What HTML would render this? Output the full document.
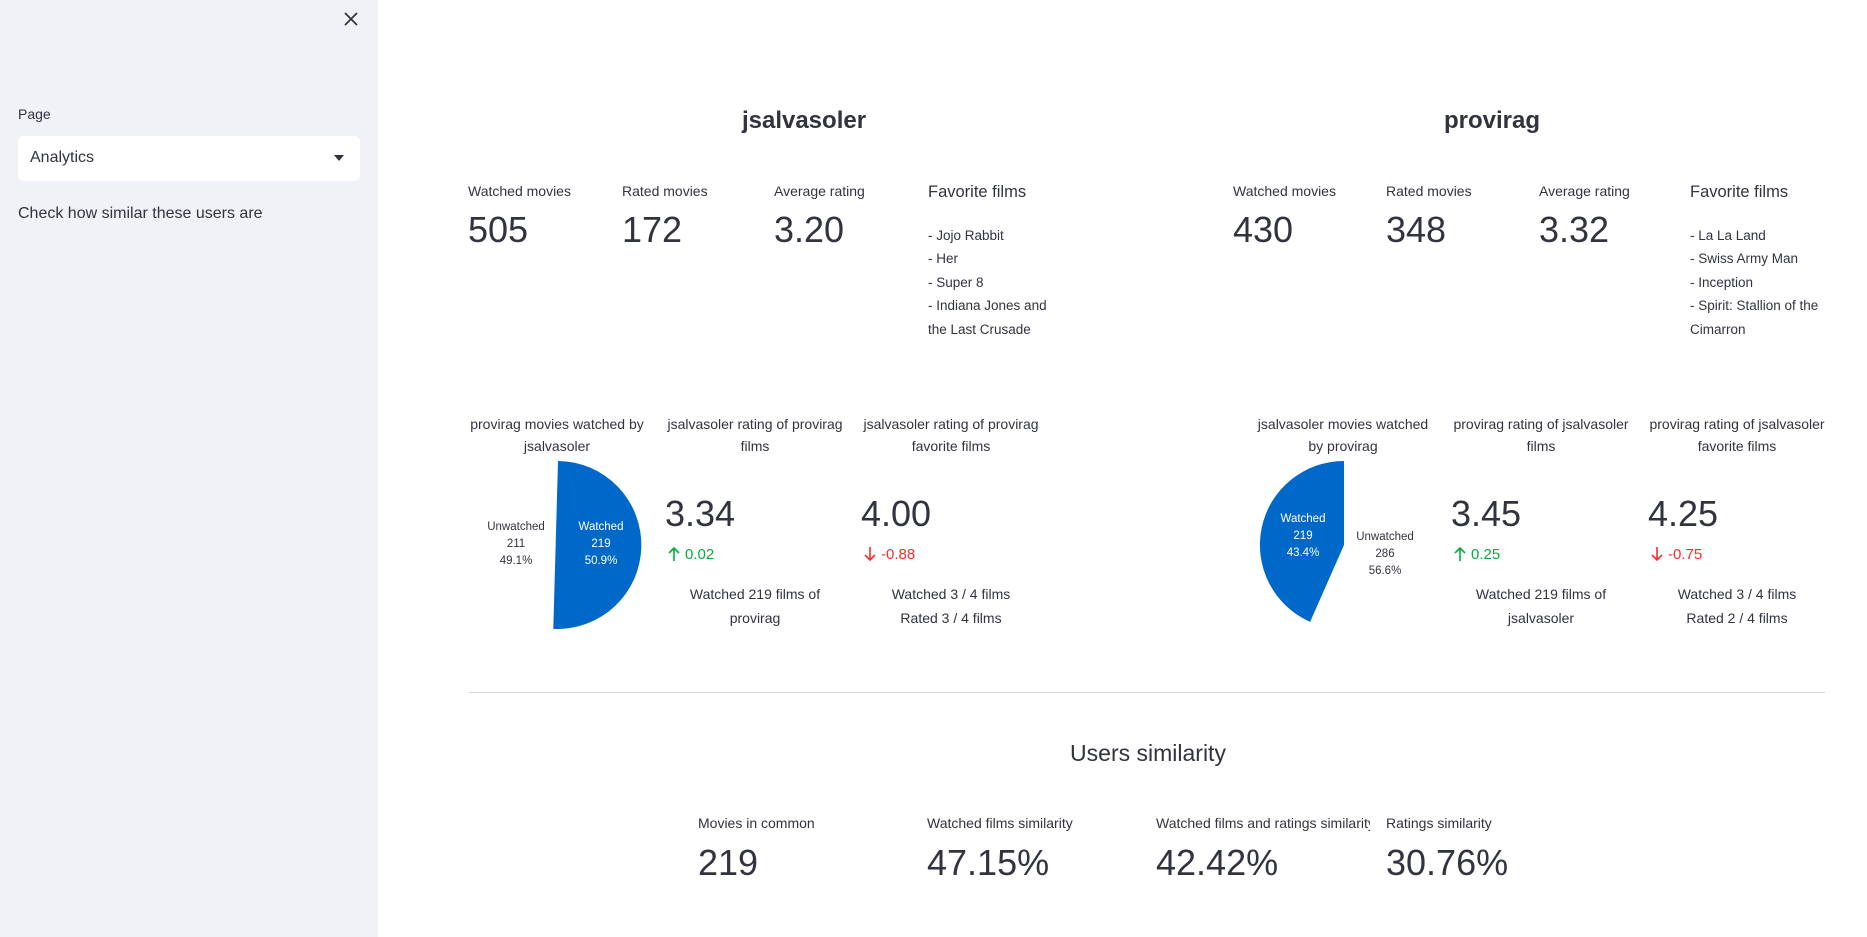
<!DOCTYPE html>
<html><head><meta charset="utf-8"><style>
*{margin:0;padding:0;box-sizing:border-box}
body{width:1867px;height:937px;overflow:hidden;background:#fff;font-family:"Liberation Sans",sans-serif;color:#31333F;position:relative}
.a{position:absolute;white-space:nowrap}
.sb{position:absolute;left:0;top:0;width:378px;height:937px;background:#F0F2F6}
.lbl{font-size:14px;line-height:20px}
.val{font-size:36px;line-height:44px}
.li{font-size:13.5px;line-height:20px}
.c{text-align:center;transform:translateX(-50%)}
.h{font-size:14px;line-height:22px}
.pl{font-size:11.5px;line-height:17px;text-align:center;transform:translateX(-50%)}
.d{font-size:15px;line-height:20px}
.d svg{vertical-align:-2px;margin-right:5px}
</style></head><body>
<div class="sb"></div>
<svg class="a" style="left:343px;top:11px" width="16" height="16" viewBox="0 0 16 16"><path d="M2 2L14 14M14 2L2 14" stroke="#31333F" stroke-width="1.8"/></svg>
<div class="a" style="left:18px;top:104px;font-size:14px;line-height:20px">Page</div>
<div class="a" style="left:18px;top:136px;width:342px;height:45px;background:#fff;border-radius:6px"></div>
<div class="a" style="left:30px;top:148px;font-size:16px;line-height:20px">Analytics</div>
<svg class="a" style="left:334px;top:155px" width="10" height="6"><path d="M0 0H10L5 6Z" fill="#31333F"/></svg>
<div class="a" style="left:18px;top:203px;font-size:16px;line-height:22px">Check how similar these users are</div>

<div class="a c" style="left:804px;top:105px;font-size:24px;line-height:32px;font-weight:bold">jsalvasoler</div>
<div class="a c" style="left:1492px;top:105px;font-size:24px;line-height:32px;font-weight:bold">provirag</div>

<div class="a lbl" style="left:468px;top:181px">Watched movies</div>
<div class="a lbl" style="left:622px;top:181px">Rated movies</div>
<div class="a lbl" style="left:774px;top:181px">Average rating</div>
<div class="a" style="left:928px;top:181px;font-size:16.5px;line-height:22px">Favorite films</div>
<div class="a val" style="left:468px;top:208px">505</div>
<div class="a val" style="left:622px;top:208px">172</div>
<div class="a val" style="left:774px;top:208px">3.20</div>
<div class="a li" style="left:928px;top:224px;line-height:23.4px">- Jojo Rabbit<br>- Her<br>- Super 8<br>- Indiana Jones and<br>the Last Crusade</div>

<div class="a lbl" style="left:1233px;top:181px">Watched movies</div>
<div class="a lbl" style="left:1386px;top:181px">Rated movies</div>
<div class="a lbl" style="left:1539px;top:181px">Average rating</div>
<div class="a" style="left:1690px;top:181px;font-size:16.5px;line-height:22px">Favorite films</div>
<div class="a val" style="left:1233px;top:208px">430</div>
<div class="a val" style="left:1386px;top:208px">348</div>
<div class="a val" style="left:1539px;top:208px">3.32</div>
<div class="a li" style="left:1690px;top:224px;line-height:23.4px">- La La Land<br>- Swiss Army Man<br>- Inception<br>- Spirit: Stallion of the<br>Cimarron</div>

<div class="a h c" style="left:557px;top:413px;text-align:center">provirag movies watched by<br>jsalvasoler</div>
<div class="a h c" style="left:755px;top:413px;text-align:center">jsalvasoler rating of provirag<br>films</div>
<div class="a h c" style="left:951px;top:413px;text-align:center">jsalvasoler rating of provirag<br>favorite films</div>
<svg class="a" style="left:0;top:0" width="1867" height="937"><path d="M558 461A84 84 0 1 1 553.3 628.9Z" fill="#0068C9"/><path d="M1344 461A84 84 0 0 0 1310.1 621.9L1344 545Z" fill="#0068C9"/></svg>
<div class="a pl" style="left:601px;top:519px;color:#fff">Watched<br>219<br>50.9%</div>
<div class="a pl" style="left:516px;top:519px">Unwatched<br>211<br>49.1%</div>
<div class="a val" style="left:665px;top:492px">3.34</div>
<div class="a val" style="left:861px;top:492px">4.00</div>
<div class="a d" style="left:668px;top:545px;color:#09AB3B"><svg width="12" height="14" viewBox="0 0 12 14"><path d="M6 14V1M1 6L6 1L11 6" stroke="#09AB3B" stroke-width="1.6" fill="none"/></svg>0.02</div>
<div class="a d" style="left:864px;top:545px;color:#FF2B2B"><svg width="12" height="14" viewBox="0 0 12 14"><path d="M6 0V13M1 8L6 13L11 8" stroke="#FF2B2B" stroke-width="1.6" fill="none"/></svg>-0.88</div>
<div class="a h c" style="left:755px;top:582px;text-align:center;line-height:24px">Watched 219 films of<br>provirag</div>
<div class="a h c" style="left:951px;top:582px;text-align:center;line-height:24px">Watched 3 / 4 films<br>Rated 3 / 4 films</div>

<div class="a h c" style="left:1343px;top:413px;text-align:center">jsalvasoler movies watched<br>by provirag</div>
<div class="a h c" style="left:1541px;top:413px;text-align:center">provirag rating of jsalvasoler<br>films</div>
<div class="a h c" style="left:1737px;top:413px;text-align:center">provirag rating of jsalvasoler<br>favorite films</div>
<div class="a pl" style="left:1303px;top:511px;color:#fff">Watched<br>219<br>43.4%</div>
<div class="a pl" style="left:1385px;top:529px">Unwatched<br>286<br>56.6%</div>
<div class="a val" style="left:1451px;top:492px">3.45</div>
<div class="a val" style="left:1648px;top:492px">4.25</div>
<div class="a d" style="left:1454px;top:545px;color:#09AB3B"><svg width="12" height="14" viewBox="0 0 12 14"><path d="M6 14V1M1 6L6 1L11 6" stroke="#09AB3B" stroke-width="1.6" fill="none"/></svg>0.25</div>
<div class="a d" style="left:1651px;top:545px;color:#FF2B2B"><svg width="12" height="14" viewBox="0 0 12 14"><path d="M6 0V13M1 8L6 13L11 8" stroke="#FF2B2B" stroke-width="1.6" fill="none"/></svg>-0.75</div>
<div class="a h c" style="left:1541px;top:582px;text-align:center;line-height:24px">Watched 219 films of<br>jsalvasoler</div>
<div class="a h c" style="left:1737px;top:582px;text-align:center;line-height:24px">Watched 3 / 4 films<br>Rated 2 / 4 films</div>

<div class="a" style="left:469px;top:692px;width:1356px;height:1px;background:#D6D6D9"></div>
<div class="a c" style="left:1148px;top:739px;font-size:23px;line-height:28px">Users similarity</div>

<div class="a lbl" style="left:698px;top:813px">Movies in common</div>
<div class="a lbl" style="left:927px;top:813px">Watched films similarity</div>
<div class="a lbl" style="left:1156px;top:813px;width:214px;overflow:hidden">Watched films and ratings similarity</div>
<div class="a lbl" style="left:1386px;top:813px">Ratings similarity</div>
<div class="a val" style="left:698px;top:841px">219</div>
<div class="a val" style="left:927px;top:841px">47.15%</div>
<div class="a val" style="left:1156px;top:841px">42.42%</div>
<div class="a val" style="left:1386px;top:841px">30.76%</div>
</body></html>
